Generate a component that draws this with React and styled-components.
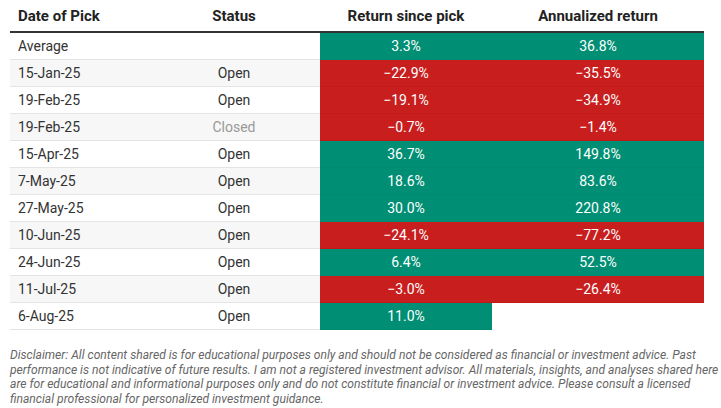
import styled, { createGlobalStyle } from "styled-components";

const GlobalStyle = createGlobalStyle`
  body {
    margin: 0;
    background: #fff;
    overflow: hidden;
    font-family: Roboto, "Liberation Sans", sans-serif;
  }
`;

const Page = styled.div`
  padding: 0 10px;
  width: 721px;
  box-sizing: border-box;
`;

const Table = styled.table`
  width: 694px;
  border-collapse: collapse;
  table-layout: fixed;
`;

const HeadCell = styled.th`
  height: 31px;
  padding: 0 8px;
  font-size: 15px;
  font-weight: 700;
  color: #222;
  text-align: ${(p) => (p.$left ? "left" : "center")};
  border-bottom: 2px solid #333;
  vertical-align: middle;
`;

const Row = styled.tr`
  background: ${(p) => (p.$shade ? "#f7f7f7" : "#fff")};
`;

const Cell = styled.td`
  height: 26px;
  padding: 0 8px;
  font-size: 14px;
  font-weight: 400;
  color: ${(p) => (p.$muted ? "#999" : "#333")};
  text-align: ${(p) => (p.$left ? "left" : "center")};
  border-bottom: 1px solid #e4e4e4;
  white-space: nowrap;
`;

const ValueCell = styled.td`
  height: 26px;
  padding: 0 8px;
  font-size: 14px;
  color: #fff;
  text-align: center;
  background: ${(p) =>
    p.$tone === "up" ? "#008f74" : p.$tone === "down" ? "#c81e1e" : "#fff"};
  border-bottom: 1px solid
    ${(p) =>
      p.$tone === "up" ? "#008a70" : p.$tone === "down" ? "#c01b1b" : "#fff"};
`;

const Disclaimer = styled.p`
  margin: 18px -10px 0 0;
  font-size: 12.1px;
  line-height: 14.5px;
  font-style: italic;
  color: #666;
`;

const rows = [
  ["Average", "", "3.3%", "36.8%"],
  ["15-Jan-25", "Open", "\u221222.9%", "\u221235.5%"],
  ["19-Feb-25", "Open", "\u221219.1%", "\u221234.9%"],
  ["19-Feb-25", "Closed", "\u22120.7%", "\u22121.4%"],
  ["15-Apr-25", "Open", "36.7%", "149.8%"],
  ["7-May-25", "Open", "18.6%", "83.6%"],
  ["27-May-25", "Open", "30.0%", "220.8%"],
  ["10-Jun-25", "Open", "\u221224.1%", "\u221277.2%"],
  ["24-Jun-25", "Open", "6.4%", "52.5%"],
  ["11-Jul-25", "Open", "\u22123.0%", "\u221226.4%"],
  ["6-Aug-25", "Open", "11.0%", ""],
];

const tone = (v) => (!v ? null : v.startsWith("\u2212") ? "down" : "up");

export default function App() {
  return (
    <Page>
      <GlobalStyle />
      <Table>
        <colgroup>
          <col style={{ width: 138 }} />
          <col style={{ width: 172 }} />
          <col style={{ width: 172 }} />
          <col style={{ width: 212 }} />
        </colgroup>
        <thead>
          <tr>
            <HeadCell $left>Date of Pick</HeadCell>
            <HeadCell>Status</HeadCell>
            <HeadCell>Return since pick</HeadCell>
            <HeadCell>Annualized return</HeadCell>
          </tr>
        </thead>
        <tbody>
          {rows.map(([date, status, ret, ann], i) => (
            <Row key={i} $shade={i % 2 === 1}>
              <Cell $left>{date}</Cell>
              <Cell $muted={status === "Closed"}>{status}</Cell>
              <ValueCell $tone={tone(ret)}>{ret}</ValueCell>
              <ValueCell $tone={tone(ann)}>{ann}</ValueCell>
            </Row>
          ))}
        </tbody>
      </Table>
      <Disclaimer>
        Disclaimer: All content shared is for educational purposes only and
        should not be considered as financial or investment advice. Past
        performance is not indicative of future results. I am not a registered
        investment advisor. All materials, insights, and analyses shared here
        are for educational and informational purposes only and do not
        constitute financial or investment advice. Please consult a licensed
        financial professional for personalized investment guidance.
      </Disclaimer>
    </Page>
  );
}
